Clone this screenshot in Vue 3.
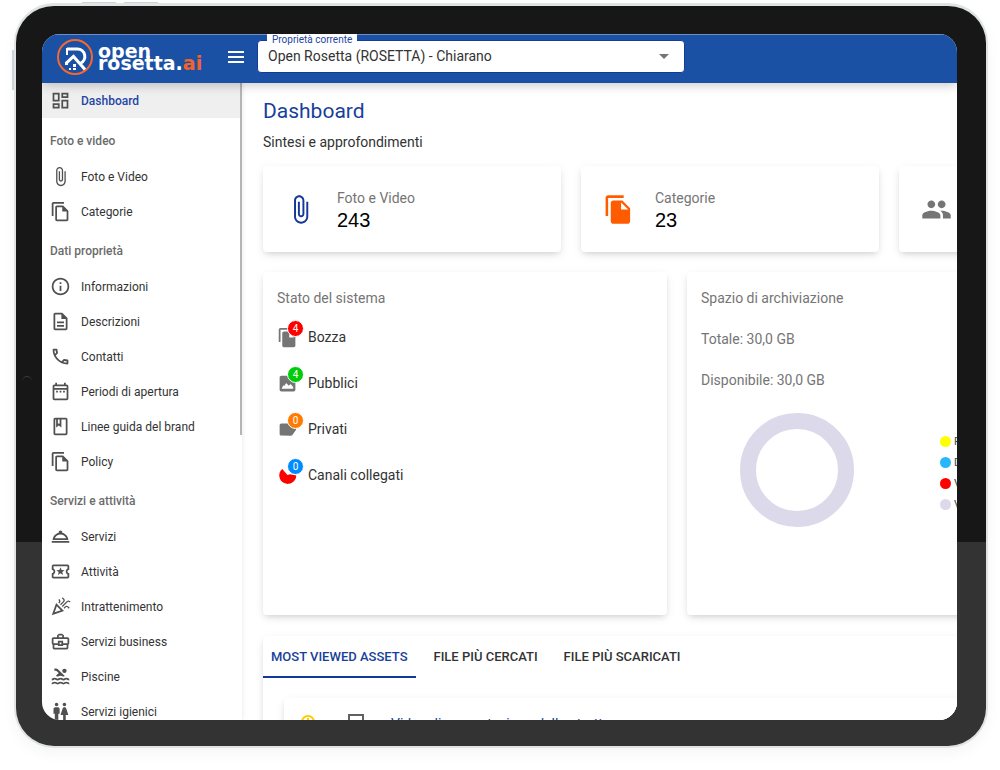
<script setup>
import { ref } from 'vue'

const paths = {
  dashboard: 'M19 5v2h-4V5h4M9 5v6H5V5h4m10 8v6h-4v-6h4M9 17v2H5v-2h4M21 3h-8v6h8V3zM11 3H3v10h8V3zm10 8h-8v10h8V11zm-10 4H3v6h8v-6z',
  clip: 'M16.5 6v11.5c0 2.21-1.79 4-4 4s-4-1.79-4-4V5c0-1.38 1.12-2.5 2.5-2.5s2.5 1.12 2.5 2.5v10.5c0 .55-.45 1-1 1s-1-.45-1-1V6H10v9.5c0 1.38 1.12 2.5 2.5 2.5s2.5-1.12 2.5-2.5V5c0-2.21-1.79-4-4-4S7 2.79 7 5v12.5c0 3.04 2.46 5.5 5.5 5.5s5.5-2.46 5.5-5.5V6h-1.5z',
  copy: 'M16 1H4c-1.1 0-2 .9-2 2v14h2V3h12V1zm-1 4H8c-1.1 0-1.99.9-1.99 2L6 21c0 1.1.89 2 1.99 2H19c1.1 0 2-.9 2-2V11l-6-6zM8 21V7h6v5h5v9H8z',
  copyFilled: 'M16 1H4c-1.1 0-2 .9-2 2v14h2V3h12V1zm-1 4l6 6v10c0 1.1-.9 2-2 2H7.99C6.89 23 6 22.1 6 21l.01-14c0-1.1.89-2 1.99-2h7zm-1 7h5.5L14 6.5V12z',
  info: 'M11 7h2v2h-2zm0 4h2v6h-2zm1-9C6.48 2 2 6.48 2 12s4.48 10 10 10 10-4.48 10-10S17.52 2 12 2zm0 18c-4.41 0-8-3.59-8-8s3.59-8 8-8 8 3.59 8 8-3.59 8-8 8z',
  description: 'M8 16h8v2H8zm0-4h8v2H8zm6-10H6c-1.1 0-2 .9-2 2v16c0 1.1.89 2 1.99 2H18c1.1 0 2-.9 2-2V8l-6-6zm4 18H6V4h7v5h5v11z',
  phone: 'M6.54 5c.06.89.21 1.76.45 2.59l-1.2 1.2c-.41-1.2-.67-2.47-.76-3.79h1.51m9.86 12.02c.85.24 1.72.39 2.6.45v1.49c-1.32-.09-2.59-.35-3.8-.75l1.2-1.19M7.5 3H4c-.55 0-1 .45-1 1 0 9.39 7.61 17 17 17 .55 0 1-.45 1-1v-3.49c0-.55-.45-1-1-1-1.24 0-2.45-.2-3.57-.57-.1-.04-.21-.05-.31-.05-.26 0-.51.1-.71.29l-2.2 2.2c-2.83-1.45-5.15-3.76-6.59-6.59l2.2-2.2c.28-.28.36-.67.25-1.02C8.7 6.45 8.5 5.25 8.5 4c0-.55-.45-1-1-1z',
  calendar: 'M7 11h2v2H7v-2zm14-5v14c0 1.1-.9 2-2 2H5c-1.11 0-2-.9-2-2l.01-14c0-1.1.88-2 1.99-2h1V2h2v2h8V2h2v2h1c1.1 0 2 .9 2 2zM5 8h14V6H5v2zm14 12V10H5v10h14zm-4-7h2v-2h-2v2zm-4 0h2v-2h-2v2z',
  book: 'M18 2H6c-1.1 0-2 .9-2 2v16c0 1.1.9 2 2 2h12c1.1 0 2-.9 2-2V4c0-1.1-.9-2-2-2zM9 4h2v5l-1-.75L9 9V4zm9 16H6V4h1v9l3-2.25L13 13V4h5v16z',
  bell: 'M2 17h20v2H2zm11.84-9.21c.1-.24.16-.51.16-.79 0-1.1-.9-2-2-2s-2 .9-2 2c0 .28.06.55.16.79C6.25 8.6 3.27 11.93 3 16h18c-.27-4.07-3.25-7.4-7.16-8.21zM12 9.58c2.95 0 5.47 1.83 6.5 4.41h-13c1.03-2.58 3.55-4.41 6.5-4.41z',
  ticket: 'M22 10V6c0-1.11-.9-2-2-2H4c-1.1 0-1.99.89-1.99 2v4c1.1 0 1.99.9 1.99 2s-.89 2-2 2v4c0 1.1.9 2 2 2h16c1.1 0 2-.9 2-2v-4c-1.1 0-2-.9-2-2s.9-2 2-2zm-2-1.46c-1.19.69-2 1.99-2 3.46s.81 2.77 2 3.46V18H4v-2.54c1.19-.69 2-1.99 2-3.46 0-1.48-.8-2.77-1.99-3.46L4 6h16v2.54zM9.07 16L12 14.12 14.93 16l-.89-3.36 2.69-2.2-3.47-.21L12 7l-1.27 3.22-3.47.21 2.69 2.2z',
  party: 'M2 22l14-5-9-9-5 14zm10.35-5.82L5.3 18.7l2.52-7.05 4.53 4.53zM14.53 12.53l5.59-5.59c.49-.49 1.28-.49 1.77 0l.59.59 1.06-1.06-.59-.59c-1.07-1.07-2.82-1.07-3.89 0l-5.59 5.59 1.06 1.06zM10.06 6.88l-.59.59 1.06 1.06.59-.59c1.07-1.07 1.07-2.82 0-3.89l-.59-.59-1.06 1.07.59.59c.48.48.48 1.28 0 1.76zM17.06 11.88l-1.59 1.59 1.06 1.06 1.59-1.59c.49-.49 1.28-.49 1.77 0l1.61 1.61 1.06-1.06-1.61-1.61c-1.08-1.07-2.82-1.07-3.89 0zM15.06 5.88l-3.59 3.59 1.06 1.06 3.59-3.59c1.07-1.07 1.07-2.82 0-3.89l-1.59-1.59-1.06 1.06 1.59 1.59c.48.49.48 1.29 0 1.77z',
  briefcase: 'M20 7h-4V5l-2-2h-4L8 5v2H4c-1.1 0-2 .9-2 2v5c0 .75.4 1.38 1 1.73V19c0 1.11.89 2 2 2h14c1.11 0 2-.89 2-2v-3.28c.59-.35 1-.99 1-1.72V9c0-1.1-.9-2-2-2zM10 5h4v2h-4V5zM4 9h16v5h-5v-3H9v3H4V9zm9 6h-2v-2h2v2zm6 4H5v-3h4v1h6v-1h4v3z',
  pool: 'M22 21c-1.11 0-1.73-.37-2.18-.64-.37-.22-.6-.36-1.15-.36-.56 0-.78.13-1.15.36-.46.27-1.07.64-2.18.64s-1.73-.37-2.18-.64c-.37-.22-.6-.36-1.15-.36-.56 0-.78.13-1.15.36-.46.27-1.08.64-2.19.64-1.11 0-1.73-.37-2.18-.64-.37-.23-.6-.36-1.15-.36s-.78.13-1.15.36c-.46.27-1.08.64-2.19.64v-2c.56 0 .78-.13 1.15-.36.46-.27 1.08-.64 2.19-.64s1.73.37 2.18.64c.37.23.59.36 1.15.36.56 0 .78-.13 1.15-.36.46-.27 1.08-.64 2.19-.64 1.11 0 1.73.37 2.18.64.37.22.6.36 1.15.36s.78-.13 1.15-.36c.45-.27 1.07-.64 2.18-.64s1.73.37 2.18.64c.37.23.59.36 1.15.36v2zM22 16.5c-1.11 0-1.73-.37-2.18-.64-.37-.22-.6-.36-1.15-.36-.56 0-.78.13-1.15.36-.46.27-1.07.64-2.18.64s-1.73-.37-2.18-.64c-.37-.22-.6-.36-1.15-.36-.56 0-.78.13-1.15.36-.46.27-1.08.64-2.19.64-1.11 0-1.73-.37-2.18-.64-.37-.23-.6-.36-1.15-.36s-.78.13-1.15.36c-.46.27-1.08.64-2.19.64v-2c.56 0 .78-.13 1.15-.36.46-.27 1.08-.64 2.19-.64s1.73.37 2.18.64c.37.23.59.36 1.15.36.56 0 .78-.13 1.15-.36.46-.27 1.08-.64 2.19-.64 1.11 0 1.73.37 2.18.64.37.22.6.36 1.15.36s.78-.13 1.15-.36c.45-.27 1.07-.64 2.18-.64s1.73.37 2.18.64c.37.23.59.36 1.15.36v2zM8.67 12c.56 0 .78-.13 1.15-.36.46-.27 1.08-.64 2.19-.64 1.11 0 1.73.37 2.18.64.37.22.6.36 1.15.36s.78-.13 1.15-.36c.12-.07.26-.15.41-.23L10.48 5C8.93 3.45 7.5 2.99 5 3v2.5c1.82-.01 2.89.39 4 1.5l1 1-3.25 3.25c.31.12.56.27.77.39.37.23.59.36 1.15.36zM16.5 3a2.5 2.5 0 1 0 0 5 2.5 2.5 0 0 0 0-5z',
  wc: 'M5.5 22v-7.5H4V9c0-1.1.9-2 2-2h3c1.1 0 2 .9 2 2v5.5H9.5V22h-4zM18 22v-6h3l-2.54-7.63C18.18 7.55 17.42 7 16.56 7h-.12c-.86 0-1.63.55-1.9 1.37L12 16h3v6h3zM7.5 6c1.11 0 2-.89 2-2s-.89-2-2-2-2 .89-2 2 .89 2 2 2zm9 0c1.11 0 2-.89 2-2s-.89-2-2-2-2 .89-2 2 .89 2 2 2z',
  group: 'M16 11c1.66 0 2.99-1.34 2.99-3S17.66 5 16 5c-1.66 0-3 1.34-3 3s1.34 3 3 3zm-8 0c1.66 0 2.99-1.34 2.99-3S9.66 5 8 5C6.34 5 5 6.34 5 8s1.34 3 3 3zm0 2c-2.33 0-7 1.17-7 3.5V19h14v-2.5c0-2.33-4.67-3.5-7-3.5zm8 0c-.29 0-.62.02-.97.05 1.16.84 1.97 1.97 1.97 3.45V19h6v-2.5c0-2.33-4.67-3.5-7-3.5z',
  image: 'M5 3h10l6 6v10c0 1.1-.9 2-2 2H5c-1.1 0-2-.9-2-2V5c0-1.1.9-2 2-2zM5.500 18h13v-2l-3-3.500-2 2-3-3-2 3-1-.5-2 3z',
  label: 'M17.63 5.84C17.27 5.33 16.67 5 16 5L5 5.01C3.9 5.01 3 5.9 3 7v10c0 1.1.9 1.99 2 1.99L16 19c.67 0 1.27-.33 1.63-.84L22 12l-4.37-6.16z',
  pie: 'M12 11.500L6 4.500A9.700 9.700 0 1 0 22 12L15 10.500z'
}

const sections = [
  {
    title: 'Foto e video',
    items: [
      { icon: 'clip', text: 'Foto e Video' },
      { icon: 'copy', text: 'Categorie' }
    ]
  },
  {
    title: 'Dati proprietà',
    items: [
      { icon: 'info', text: 'Informazioni' },
      { icon: 'description', text: 'Descrizioni' },
      { icon: 'phone', text: 'Contatti' },
      { icon: 'calendar', text: 'Periodi di apertura' },
      { icon: 'book', text: 'Linee guida del brand' },
      { icon: 'copy', text: 'Policy' }
    ]
  },
  {
    title: 'Servizi e attività',
    items: [
      { icon: 'bell', text: 'Servizi' },
      { icon: 'ticket', text: 'Attività' },
      { icon: 'party', text: 'Intrattenimento' },
      { icon: 'briefcase', text: 'Servizi business' },
      { icon: 'pool', text: 'Piscine' },
      { icon: 'wc', text: 'Servizi igienici' }
    ]
  }
]

const statuses = [
  { icon: 'copyFilled', tone: 'red', count: 4, text: 'Bozza' },
  { icon: 'image', tone: 'green', count: 4, text: 'Pubblici' },
  { icon: 'label', tone: 'orange', count: 0, text: 'Privati' },
  { icon: 'pie', tone: 'blue', count: 0, text: 'Canali collegati' }
]

const legend = [
  { tone: 'yellow', text: 'Foto' },
  { tone: 'sky', text: 'Documenti' },
  { tone: 'red', text: 'Video' },
  { tone: 'lilac', text: 'Vuoto' }
]

const tabs = ['MOST VIEWED ASSETS', 'FILE PIÙ CERCATI', 'FILE PIÙ SCARICATI']
const activeTab = ref(0)
const property = ref('chiarano')
</script>

<template>
  <div class="stage">
    <div class="tablet">
      <i class="key side"></i>
      <i class="key top-a"></i>
      <i class="key top-b"></i>
      <i class="camera"></i>
      <div class="screen">
        <header class="bar">
          <a class="brand" href="#">
            <svg class="mark" viewBox="0 0 38 38" aria-hidden="true">
              <circle cx="19" cy="19" r="17" fill="none" stroke="#f4682f" stroke-width="2" />
              <path d="M11 11h10.500a7.500 7.500 0 0 1 3 14.300" fill="none" stroke="#fff" stroke-width="3" />
              <path d="M11 10v7" stroke="#fff" stroke-width="2" />
              <path d="M10.500 27v-2l7-6.500 11.500 13" fill="none" stroke="#fff" stroke-width="3" />
              <path d="M13 30h2v2h-2zM17 30h3v2h-3zM17 26h3v3h-3z" fill="#fff" />
            </svg>
            <span class="wordmark"><span>open</span><span>rosetta.<b>ai</b></span></span>
          </a>
          <button class="menu" type="button" aria-label="Menu">
            <svg viewBox="0 0 16 12"><path d="M0 1h16M0 6h16M0 11h16" stroke="#fff" stroke-width="2" /></svg>
          </button>
          <div class="field">
            <label for="property">Proprietà corrente</label>
            <select id="property" v-model="property">
              <option value="chiarano">Open Rosetta (ROSETTA) - Chiarano</option>
            </select>
            <svg class="caret" viewBox="0 0 10 5" aria-hidden="true"><path d="M0 0h10L5 5z" fill="#757575" /></svg>
          </div>
        </header>

        <div class="body">
          <nav class="side-nav">
            <a class="item current" href="#">
              <svg class="ico" viewBox="0 0 24 24"><path :d="paths.dashboard" /></svg>Dashboard
            </a>
            <section v-for="s in sections" :key="s.title">
              <h2>{{ s.title }}</h2>
              <a v-for="i in s.items" :key="i.text" class="item" href="#">
                <svg class="ico" viewBox="0 0 24 24"><path :d="paths[i.icon]" /></svg>{{ i.text }}
              </a>
            </section>
            <i class="thumb"></i>
          </nav>

          <main>
            <div class="content">
              <h1>Dashboard</h1>
              <p class="lead">Sintesi e approfondimenti</p>

              <div class="stats">
                <article class="card stat">
                  <svg class="navy" viewBox="0 0 24 24"><path :d="paths.clip" /></svg>
                  <div><span>Foto e Video</span><strong>243</strong></div>
                </article>
                <article class="card stat">
                  <svg class="flame" viewBox="0 0 24 24"><path :d="paths.copyFilled" /></svg>
                  <div><span>Categorie</span><strong>23</strong></div>
                </article>
                <article class="card stat">
                  <svg viewBox="0 0 24 24"><path :d="paths.group" /></svg>
                </article>
              </div>

              <div class="panels">
                <section class="card panel">
                  <h3>Stato del sistema</h3>
                  <ul class="status">
                    <li v-for="s in statuses" :key="s.text">
                      <span class="marker">
                        <svg :class="s.icon" viewBox="0 0 24 24"><path fill-rule="evenodd" :d="paths[s.icon]" /></svg>
                        <em :class="s.tone">{{ s.count }}</em>
                      </span>
                      {{ s.text }}
                    </li>
                  </ul>
                </section>
                <section class="card panel">
                  <h3>Spazio di archiviazione</h3>
                  <p>Totale: 30,0 GB</p>
                  <p>Disponibile: 30,0 GB</p>
                  <div class="chart">
                    <svg viewBox="0 0 114 114" aria-hidden="true">
                      <circle cx="57" cy="57" r="49" fill="none" stroke="#dcdaea" stroke-width="16" />
                    </svg>
                    <ul>
                      <li v-for="l in legend" :key="l.text"><i :class="l.tone"></i>{{ l.text }}</li>
                    </ul>
                  </div>
                </section>
              </div>

              <section class="card assets">
                <div class="tabs" role="tablist">
                  <button
                    v-for="(t, n) in tabs"
                    :key="t"
                    type="button"
                    role="tab"
                    :aria-selected="activeTab === n"
                    :class="{ active: activeTab === n }"
                    @click="activeTab = n"
                  >{{ t }}</button>
                </div>
                <div class="card asset">
                  <svg class="coin" viewBox="0 0 16 16"><circle cx="8" cy="8" r="6" /><path d="M8 4v8M5 8h6" /></svg>
                  <svg class="display" viewBox="0 0 16 16"><path d="M1 1h14v10H1zM5 15h6" /></svg>
                  <a href="#">Video di presentazione della struttura</a>
                </div>
              </section>
            </div>
          </main>
        </div>
      </div>
    </div>
  </div>
</template>

<style>
html,
body {
  margin: 0;
  background: #fff;
}
</style>

<style scoped>
* {
  box-sizing: border-box;
}

.stage {
  height: 100vh;
  padding: 3px 12px 22px 14px;
  font-family: Roboto, "Liberation Sans", sans-serif;
  color: #333;
}

.tablet {
  position: relative;
  height: 100%;
  padding: 28px 29px 26px 26px;
  border: 2px solid #dfe3e4;
  border-top-width: 3px;
  border-radius: 40px;
  background: linear-gradient(#171717 72.5%, #333 72.5%);
  box-shadow: 0 6px 14px rgba(0, 0, 0, 0.04);
}

.key {
  position: absolute;
  background: #cfd3d5;
}

.side {
  left: -4px;
  top: 44px;
  width: 2px;
  height: 40px;
}

.top-a,
.top-b {
  top: -4px;
  width: 34px;
  height: 1px;
}

.top-a {
  left: 66px;
}

.top-b {
  left: 108px;
}

.camera {
  position: absolute;
  left: 6px;
  top: 50%;
  width: 10px;
  height: 10px;
  border-top: 1px solid #3a3a3a;
  border-radius: 50%;
}

.screen {
  display: flex;
  flex-direction: column;
  height: 100%;
  border-radius: 18px;
  overflow: hidden;
  background: #fff;
}

.bar {
  position: relative;
  z-index: 2;
  flex: none;
  display: flex;
  align-items: center;
  height: 49px;
  padding: 0 14px;
  border-top: 1px solid #6f8fc4;
  background: #1b51a5;
  box-shadow: 0 2px 10px rgba(0, 0, 0, 0.22);
}

.brand {
  flex: none;
  display: flex;
  align-items: center;
  gap: 4px;
  width: 172px;
  padding-bottom: 4px;
  color: #fff;
  text-decoration: none;
}

.mark {
  flex: none;
  width: 38px;
  height: 38px;
}

.wordmark {
  display: flex;
  flex-direction: column;
  font: 700 19px/12px "DejaVu Sans", sans-serif;
}

.wordmark b {
  color: #f4622c;
}

.menu {
  display: flex;
  width: 16px;
  padding: 0 0 5px;
  border: 0;
  background: none;
}

.menu svg {
  width: 16px;
  height: 12px;
}

.field {
  position: relative;
  flex: 0 1 428px;
  margin-left: 13px;
  padding-bottom: 5px;
}

.field label {
  position: absolute;
  left: 10px;
  top: -6px;
  padding: 0 5px;
  background: #fff;
  color: #2346a5;
  font-size: 10px;
  line-height: 12px;
}

.field select {
  display: block;
  width: 100%;
  height: 33px;
  padding: 0 10px 2px;
  border: 1px solid #123c98;
  border-radius: 4px;
  appearance: none;
  background: #fff;
  color: #333;
  font: 14px Roboto, "Liberation Sans", sans-serif;
}

.caret {
  position: absolute;
  right: 16px;
  top: 14px;
  width: 10px;
  height: 5px;
}

.body {
  flex: 1;
  min-height: 0;
  display: flex;
}

.side-nav {
  position: relative;
  flex: none;
  width: 200px;
  overflow: hidden;
  box-shadow: 1px 0 4px rgba(0, 0, 0, 0.07);
}

.thumb {
  position: absolute;
  right: 0;
  top: 0;
  width: 2px;
  height: 352px;
  background: #b5b5b5;
}

.side-nav h2 {
  display: flex;
  align-items: center;
  height: 40px;
  margin: 0;
  padding: 4px 8px 0;
  color: #6b6b6b;
  font-size: 12px;
  font-weight: 500;
}

.item {
  display: flex;
  align-items: center;
  gap: 10px;
  height: 35px;
  padding: 0 8px;
  color: #333;
  font-size: 12px;
  text-decoration: none;
}

.current {
  margin-bottom: 1px;
  background: #efefef;
  color: #2346a5;
  font-weight: 500;
}

.ico {
  width: 21px;
  height: 21px;
  fill: #505050;
}

main {
  flex: 1;
  min-width: 0;
  overflow: hidden;
  padding: 16px 21px 0;
}

.content {
  min-width: 1252px;
}

h1 {
  margin: 0 0 9px;
  color: #173f9b;
  font-size: 21px;
  font-weight: 400;
  line-height: 24px;
}

.lead {
  margin: 0 0 14px;
  font-size: 14px;
  line-height: 20px;
}

.card {
  border-radius: 4px;
  background: #fff;
  box-shadow: 0 3px 6px -2px rgba(0, 0, 0, 0.16), 0 3px 12px rgba(0, 0, 0, 0.06);
}

.stats {
  display: grid;
  grid-template-columns: repeat(4, 1fr);
  gap: 20px;
  margin-bottom: 20px;
}

.stat {
  display: flex;
  align-items: center;
  gap: 21px;
  height: 86px;
  padding: 0 22px;
}

.stat svg {
  width: 31px;
  height: 31px;
  fill: #757575;
}

.stat .navy {
  fill: #12389a;
}

.stat .flame {
  fill: #ff5c00;
}

.stat span,
.stat strong {
  display: block;
  line-height: 22px;
}

.stat span {
  color: #757575;
  font-size: 14px;
}

.stat strong {
  color: #000;
  font-family: "Liberation Sans", Arial, sans-serif;
  font-size: 20px;
  font-weight: 400;
}

.panels {
  display: grid;
  grid-template-columns: repeat(3, 1fr);
  gap: 20px;
  margin-bottom: 21px;
}

.panel {
  min-height: 343px;
  padding: 15px 14px;
}

.panel h3,
.panel p {
  margin: 0 0 19px;
  color: #757575;
  font-size: 14px;
  font-weight: 400;
  line-height: 22px;
}

ul {
  margin: 0;
  padding: 0;
  list-style: none;
}

.status {
  margin-top: -14px;
}

.status li {
  display: flex;
  align-items: center;
  gap: 10px;
  height: 46px;
  font-size: 14px;
}

.marker {
  position: relative;
  width: 21px;
  height: 21px;
}

.marker svg {
  width: 21px;
  height: 21px;
  fill: #757575;
}

.marker .pie {
  fill: #f00;
}

.marker em {
  position: absolute;
  left: 10px;
  top: -7px;
  width: 17px;
  height: 17px;
  border: 1px solid #fff;
  border-radius: 50%;
  color: #fff;
  font-size: 10px;
  font-style: normal;
  line-height: 15px;
  text-align: center;
}

.red {
  background: #f00;
}

.green {
  background: #00cc0a;
}

.orange {
  background: #ff7a00;
}

.blue {
  background: #008cff;
}

.yellow {
  background: #ff0;
}

.sky {
  background: #29b6ff;
}

.lilac {
  background: #dcdaea;
}

.chart {
  display: grid;
  grid-template-columns: 192px 1fr;
  gap: 47px;
  align-items: center;
  margin-top: 22px;
}

.chart svg {
  width: 114px;
  height: 114px;
  justify-self: center;
}

.chart ul {
  padding-top: 6px;
}

.chart li {
  display: flex;
  align-items: center;
  gap: 3px;
  height: 21px;
  color: #444;
  font-size: 11px;
}

.chart i {
  width: 11px;
  height: 11px;
  border-radius: 50%;
}

.assets {
  min-height: 240px;
}

.tabs {
  display: flex;
  gap: 10px;
  margin-bottom: 20px;
}

.tabs button {
  height: 42px;
  padding: 0 8px;
  border: 0;
  border-bottom: 2px solid transparent;
  background: none;
  color: #333;
  font: 500 13px Roboto, "Liberation Sans", sans-serif;
}

.tabs .active {
  border-color: #12389a;
  color: #173f9b;
}

.asset {
  display: flex;
  align-items: flex-start;
  height: 60px;
  margin: 0 21px;
  padding: 16px;
}

.asset svg {
  width: 16px;
  height: 16px;
  fill: none;
  stroke: #616161;
  stroke-width: 2;
}

.asset .coin {
  margin-right: 32px;
  stroke: #fc0;
}

.asset a {
  margin-left: 27px;
  padding-top: 2px;
  color: #173f9b;
  font-size: 14px;
  text-decoration: none;
}
</style>
